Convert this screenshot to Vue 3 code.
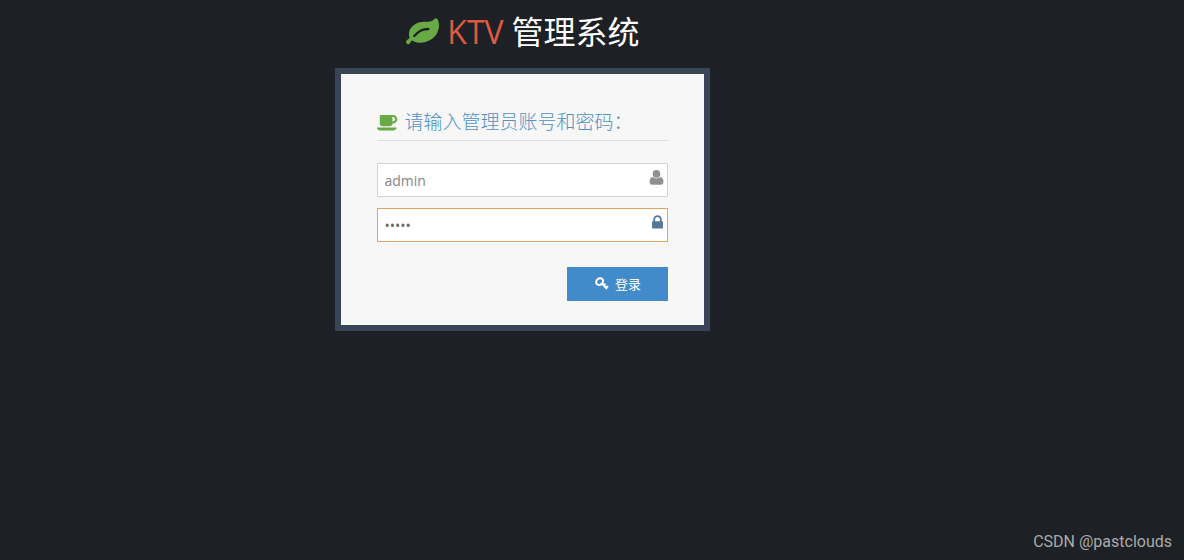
<script setup>
import { ref } from 'vue'

const username = ref('admin')
const password = ref('admin')
</script>

<template>
  <div class="page">
    <main class="stage">
      <h1 class="brand">
        <svg class="leaf" viewBox="0 0 1792 1792" aria-hidden="true">
          <path d="M1280 704q0-26-19-45t-45-19q-172 0-318 49.500t-259.500 134-235.500 219.500q-19 21-19 45 0 26 19 45t45 19q24 0 45-19 27-24 74-71t67-66q137-124 268.500-176t313.500-52q26 0 45-19t19-45zm512-198q0 95-20 193-46 224-184.500 383t-357.500 268q-214 108-438 108-148 0-286-47-15-5-88-42t-96-37q-16 0-39.500 32t-45 70-52.500 70-60 32q-43 0-63.500-17.500t-45.500-59.500q-2-4-6-11t-5.500-10-3-9.500-1.500-13.500q0-35 31-73.500t68-65.500 68-56 31-48q0-4-14-38t-16-44q-9-51-9-104 0-115 43.500-220t119-184.500 170.500-139 204-95.500q55-18 145-25.500t179.500-9 178.500-6 163.500-24 113.500-56.500l29.500-29.500 29.500-28 27-20 36.500-16 43.500-4.500q39 0 70.500 46t47.500 112 24 124 8 96z" />
        </svg>
        <span class="brand-name">KTV</span>
        <span class="brand-title">管理系统</span>
      </h1>

      <form class="card" @submit.prevent>
        <h2 class="heading">
          <svg class="cup" viewBox="0 0 1920 1792" aria-hidden="true">
            <path d="M1664 640q0-80-56-136t-136-56h-64v384h64q80 0 136-56t56-136zm-1664 768h1792q0 106-75 181t-181 75h-1280q-106 0-181-75t-75-181zm1856-768q0 159-112.500 271.500t-271.500 112.500h-64v32q0 92-66 158t-158 66h-704q-92 0-158-66t-66-158v-736q0-26 19-45t45-19h1152q159 0 271.500 112.500t112.500 271.500z" />
          </svg>
          <span>请输入管理员账号和密码：</span>
        </h2>

        <label class="field">
          <input v-model="username" type="text" aria-label="账号" />
          <svg class="field-icon user" viewBox="0 0 16 16" aria-hidden="true">
            <circle cx="8" cy="4.600" r="3.600" />
            <path d="M4.700 7.500C2.400 7.600 1.500 9.500 1.500 12.200C1.500 14 2.400 14.800 4 14.800H12C13.600 14.800 14.500 14 14.500 12.200C14.500 9.500 13.600 7.600 11.300 7.500C9.500 9.300 6.500 9.300 4.700 7.500Z" />
          </svg>
        </label>

        <label class="field active">
          <input v-model="password" type="password" aria-label="密码" />
          <svg class="field-icon lock" viewBox="0 0 1792 1792" aria-hidden="true">
            <path d="M640 768h512v-192q0-106-75-181t-181-75-181 75-75 181v192zm832 96v576q0 40-28 68t-68 28h-960q-40 0-68-28t-28-68v-576q0-40 28-68t68-28h32v-192q0-184 132-316t316-132 316 132 132 316v192h32q40 0 68 28t28 68z" />
          </svg>
        </label>

        <button class="submit" type="submit">
          <svg class="key" viewBox="0 0 14 14" aria-hidden="true">
            <ellipse cx="4.600" cy="5.600" rx="3.700" ry="3" transform="rotate(-40 4.600 5.600)" />
            <path d="M6.800 7.200L12 13M8.600 9.400L10.400 7.600M10.800 12L13 10" />
          </svg>
          <span>登录</span>
        </button>
      </form>
    </main>
    <footer class="credit">CSDN @pastclouds</footer>
  </div>
</template>

<style>
body {
  background: #fff;
}
</style>

<style scoped>
.page {
  box-sizing: border-box;
  display: flex;
  flex-direction: column;
  min-height: 100vh;
  margin-right: 4px;
  background: #1d2024;
  font-family: "Open Sans", "Noto Sans CJK SC", sans-serif;
}

svg {
  flex: none;
  fill: currentColor;
}

.stage {
  display: flex;
  flex: 1;
  flex-direction: column;
  align-items: center;
  width: 88%;
  padding: 8px 0 0 2px;
}

.brand {
  display: flex;
  align-items: center;
  gap: 8px;
  margin: 0;
  font-size: 32px;
  font-weight: 400;
  line-height: 48px;
}

.leaf {
  width: 33px;
  height: 33px;
  color: #69aa46;
}

.brand-name {
  color: #dd5a43;
}

.brand-title {
  color: #fff;
}

.card {
  box-sizing: border-box;
  display: flex;
  flex-direction: column;
  width: 100%;
  max-width: 375px;
  margin-top: 12px;
  padding: 32px 36px 24px;
  border: 6px solid #394557;
  background: #f7f7f7;
}

.heading {
  display: flex;
  align-items: center;
  gap: 6px;
  margin: 0 0 22px;
  padding-bottom: 2px;
  border-bottom: 1px solid #dcdfe3;
  color: #5090c4;
  font-size: 19px;
  font-weight: 300;
  line-height: 32px;
  white-space: nowrap;
}

.cup {
  width: 21px;
  height: 20px;
  color: #69aa46;
}

.field {
  position: relative;
  display: block;
  margin-bottom: 11px;
  color: #858585;
}

.field input {
  box-sizing: border-box;
  display: block;
  width: 100%;
  height: 34px;
  padding: 0 26px 0 6px;
  border: 1px solid #d0d4d8;
  border-radius: 0;
  outline: none;
  background: #fff;
  color: #858585;
  font-family: inherit;
  font-size: 14px;
}

.field.active input {
  border-color: #e0a460;
  color: #696969;
}

.field-icon {
  position: absolute;
  top: 6px;
  right: 3px;
  width: 17px;
  height: 17px;
  color: #909090;
}

.field-icon.lock {
  right: 2px;
  color: #557799;
}

.submit {
  display: flex;
  align-items: center;
  justify-content: center;
  align-self: flex-end;
  gap: 6px;
  width: 101px;
  height: 34px;
  margin-top: 14px;
  padding: 0 0 2px;
  border: 0;
  background: #428bca;
  color: #fff;
  font-family: inherit;
  font-size: 13px;
}

.key {
  width: 14px;
  height: 14px;
  fill: none;
  stroke: currentColor;
  stroke-width: 2;
}

.credit {
  padding: 0 12px 8px;
  color: #a9abad;
  font-family: Roboto, "Liberation Sans", sans-serif;
  font-size: 16px;
  line-height: 20px;
  text-align: right;
}
</style>
